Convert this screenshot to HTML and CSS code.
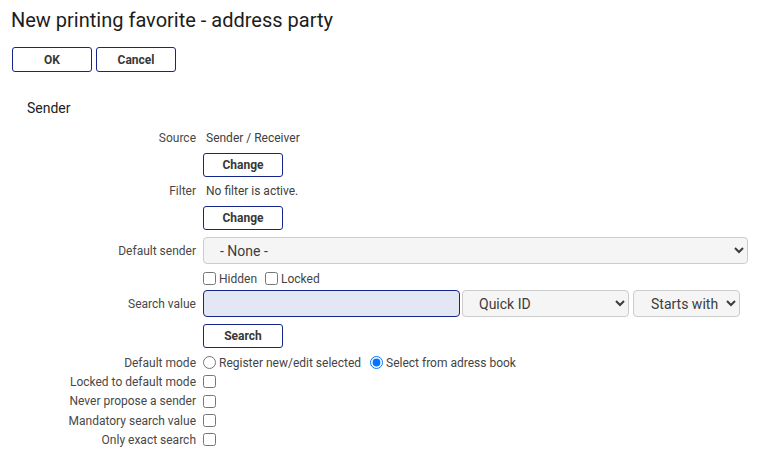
FILE: index.html
```html
<!DOCTYPE html>
<html lang="en">
<head>
<meta charset="utf-8">
<title>New printing favorite - address party</title>
<link rel="stylesheet" href="styles.css">
</head>
<body>
<h1 class="title">New printing favorite - address party</h1>
<div class="actions">
  <button class="btn btn-main" type="button">OK</button>
  <button class="btn btn-main" type="button">Cancel</button>
</div>
<h2 class="section">Sender</h2>
<div class="form">
  <div class="row row-text">
    <span class="label">Source</span>
    <span class="value">Sender / Receiver</span>
  </div>
  <div class="row row-btn">
    <span class="label"></span>
    <div><button class="btn btn-small" type="button">Change</button></div>
  </div>
  <div class="row row-text row-filter">
    <span class="label">Filter</span>
    <span class="value">No filter is active.</span>
  </div>
  <div class="row row-btn">
    <span class="label"></span>
    <div><button class="btn btn-small" type="button">Change</button></div>
  </div>
  <div class="row row-select">
    <span class="label">Default sender</span>
    <div><select class="sel sel-wide"><option>- None -</option></select></div>
  </div>
  <div class="row row-checks">
    <span class="label"></span>
    <div class="checks">
      <label class="check"><input type="checkbox"><span>Hidden</span></label>
      <label class="check"><input type="checkbox"><span>Locked</span></label>
    </div>
  </div>
  <div class="row row-search">
    <span class="label">Search value</span>
    <div class="search">
      <input class="search-input" type="text">
      <select class="sel sel-field"><option>Quick ID</option></select>
      <select class="sel sel-match"><option>Starts with</option></select>
    </div>
  </div>
  <div class="row row-btn">
    <span class="label"></span>
    <div><button class="btn btn-small" type="button">Search</button></div>
  </div>
  <div class="row row-opt row-mode">
    <span class="label">Default mode</span>
    <div class="radios">
      <label class="radio"><input type="radio" name="mode"><span>Register new/edit selected</span></label>
      <label class="radio"><input type="radio" name="mode" checked><span>Select from adress book</span></label>
    </div>
  </div>
  <div class="row row-opt">
    <span class="label">Locked to default mode</span>
    <div><input class="box" type="checkbox"></div>
  </div>
  <div class="row row-opt">
    <span class="label">Never propose a sender</span>
    <div><input class="box" type="checkbox"></div>
  </div>
  <div class="row row-opt">
    <span class="label">Mandatory search value</span>
    <div><input class="box" type="checkbox"></div>
  </div>
  <div class="row row-opt">
    <span class="label">Only exact search</span>
    <div><input class="box" type="checkbox"></div>
  </div>
</div>
</body>
</html>
```

FILE: styles.css
```css
body {
  margin: 0;
  background: #ffffff;
  font-family: Roboto, "Liberation Sans", sans-serif;
  font-size: 12px;
  color: #444444;
}

.title {
  margin: 0;
  padding: 8px 0 0 11px;
  font-size: 20px;
  line-height: 24px;
  font-weight: 400;
  color: #1c1c1c;
}

.actions {
  display: flex;
  gap: 4px;
  margin-top: 15px;
  padding-left: 12px;
}

.btn {
  box-sizing: border-box;
  width: 80px;
  padding: 0;
  border: 1px solid #16258a;
  border-radius: 3px;
  background: #ffffff;
  font-family: Roboto, "Liberation Sans", sans-serif;
  font-size: 12px;
  font-weight: 700;
  color: #383838;
}

.btn-main {
  height: 25px;
}

.btn-small {
  height: 24px;
  display: block;
}

.section {
  margin: 28px 0 0 27px;
  font-size: 14px;
  line-height: 16px;
  font-weight: 400;
  color: #222222;
}

.form {
  margin-top: 14px;
}

.row {
  display: grid;
  grid-template-columns: 196px 1fr;
  column-gap: 7px;
  align-items: center;
}

.label {
  text-align: right;
  color: #484848;
  white-space: nowrap;
}

.value {
  padding-left: 3px;
  color: #404040;
}

.row-text {
  height: 16px;
  line-height: 16px;
}

.row-filter {
  margin-top: 6px;
}

.row-btn {
  margin-top: 7px;
}

.row-select {
  margin-top: 7px;
}

.sel {
  box-sizing: border-box;
  height: 27px;
  border: 1px solid #cccccc;
  border-radius: 4px;
  background-color: #f5f5f5;
  font-family: Roboto, "Liberation Sans", sans-serif;
  font-size: 14px;
  color: #3c3c3c;
  display: block;
}

.sel-wide {
  width: 545px;
  padding: 0 8px 0 12px;
}

.row-checks {
  height: 15px;
  margin-top: 7px;
}

.checks {
  display: flex;
  align-items: center;
  gap: 8px;
}

.check,
.radio {
  display: flex;
  align-items: center;
  gap: 3px;
}

.check input,
.radio input,
.box {
  margin: 0;
  width: 13px;
  height: 13px;
}

.box {
  display: block;
}

.row-search {
  margin-top: 4px;
}

.search {
  display: flex;
  align-items: center;
}

.search-input {
  box-sizing: border-box;
  width: 257px;
  height: 27px;
  margin: 0 2px 0 0;
  border: 1px solid #16258a;
  border-radius: 4px;
  background: #e3e6f3;
}

.sel-field {
  width: 167px;
  margin-right: 4px;
  padding: 0 6px 0 12px;
}

.sel-match {
  width: 107px;
  padding: 0 2px 0 13px;
}

.row-opt {
  height: 19.3px;
}

.row-mode {
  margin-top: 5px;
}

.radios {
  display: flex;
  align-items: center;
  gap: 9px;
}
```
